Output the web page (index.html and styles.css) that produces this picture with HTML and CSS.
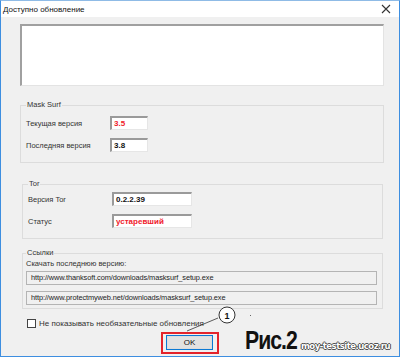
FILE: index.html
```html
<!DOCTYPE html>
<html>
    <head>
        <meta charset="UTF-8">
        <title>Доступно обновление</title>
        <link rel="stylesheet" href="styles.css">
    </head>
    <body>
        <div class="window">
            <div class="titlebar">
                <span class="title">Доступно обновление</span>
                <svg class="close" width="10" height="10" viewBox="0 0 10 10">
                    <path d="M1 1L9 9M9 1L1 9" stroke="#333" stroke-width="1.1"/>
                </svg>
            </div>
            <div class="content">
                <div class="notes"></div>

                <fieldset class="group group-mask">
                    <legend>Mask Surf</legend>
                    <div class="row">
                        <span class="label">Текущая версия</span>
                        <div class="field short red">3.5</div>
                    </div>
                    <div class="row">
                        <span class="label">Последняя версия</span>
                        <div class="field short">3.8</div>
                    </div>
                </fieldset>

                <fieldset class="group group-tor">
                    <legend>Tor</legend>
                    <div class="row">
                        <span class="label">Версия Tor</span>
                        <div class="field long">0.2.2.39</div>
                    </div>
                    <div class="row">
                        <span class="label">Статус</span>
                        <div class="field long red">устаревший</div>
                    </div>
                </fieldset>

                <fieldset class="group group-links">
                    <legend>Ссылки</legend>
                    <div class="caption">Скачать последнюю версию:</div>
                    <div class="url">http://www.thanksoft.com/downloads/masksurf_setup.exe</div>
                    <div class="url">http://www.protectmyweb.net/downloads/masksurf_setup.exe</div>
                </fieldset>

                <label class="check">
                    <span class="box"></span>
                    Не показывать необязательные обновления
                </label>

                <div class="footer">
                    <div class="highlight">
                        <button class="ok">OK</button>
                    </div>
                </div>
            </div>

            <!-- annotations drawn over the screenshot -->
            <svg class="pointer" width="60" height="30" viewBox="0 0 60 30">
                <line x1="2" y1="27" x2="33" y2="14" stroke="#333" stroke-width="0.8"/>
                <circle cx="42" cy="11" r="8" fill="#fff" stroke="#333" stroke-width="1"/>
            </svg>
            <span class="num">1</span>
            <span class="dot"></span>
            <span class="fig">Рис.2</span>
            <span class="site">moy-testsite.ucoz.ru</span>
        </div>
    </body>
</html>
```

FILE: styles.css
```css
body {
    margin: 0;
    font-family: "Liberation Sans", Arial, sans-serif;
    font-size: 8px;
    color: #222;
}
.window {
    position: relative;
    width: 400px;
    height: 357px;
    box-sizing: border-box;
    border: 1px solid #3d8ee0;
    border-top-color: #8fbbe6;
    background-color: #f0f0f0;
    overflow: hidden;
}
.titlebar {
    height: 16px;
    background-color: #fff;
    display: flex;
    align-items: center;
    justify-content: space-between;
    padding: 0 8px 0 2px;
}
.title {
    font-size: 8px;
    color: #111;
}
.content {
    padding: 7px 15px 0 19px;
}
.notes {
    height: 62px;
    box-sizing: border-box;
    background-color: #fff;
    border-top: 2px solid #a0a0a0;
    border-left: 2px solid #a0a0a0;
    border-right: 1px solid #e3e3e3;
    border-bottom: 1px solid #e3e3e3;
}
.group {
    margin: 0;
    border: 1px solid #dcdcdc;
    padding: 0 5px;
    min-width: 0;
}
.group legend {
    padding: 0 1px;
    margin-left: 0;
    line-height: 10px;
    font-size: 7.5px;
    color: #333;
}
.group-mask {
    margin-top: 14px;
    padding-top: 6px;
    padding-bottom: 10px;
}
.group-tor {
    margin: 16px 1px 0 2px;
    padding-top: 3px;
    padding-bottom: 10px;
}
.group-links {
    margin: 9px 1px 0 2px;
    padding-top: 1px;
    padding-bottom: 3px;
    padding-left: 3px;
}
.row {
    display: flex;
    align-items: center;
    height: 14px;
}
.row + .row {
    margin-top: 8px;
}
.label {
    width: 84px;
    font-size: 7.5px;
    color: #333;
}
.field {
    height: 14px;
    box-sizing: border-box;
    background-color: #fff;
    border-top: 2px solid #9a9a9a;
    border-left: 2px solid #9a9a9a;
    border-right: 1px solid #e6e6e6;
    border-bottom: 1px solid #e6e6e6;
    padding-left: 2px;
    font-weight: bold;
    line-height: 11px;
    color: #111;
}
.field.short {
    width: 38px;
}
.field.long {
    width: 80px;
}
.field.red {
    color: #f0202a;
}
.caption {
    line-height: 10px;
    font-size: 7.5px;
    color: #333;
}
.url {
    margin-top: 2px;
    height: 14px;
    box-sizing: border-box;
    border: 1px solid #b4b4b4;
    background-color: #f0f0f0;
    padding-left: 4px;
    line-height: 12px;
    font-size: 7.4px;
    letter-spacing: -0.1px;
    color: #222;
}
.url + .url {
    margin-top: 6px;
}
.check {
    display: flex;
    align-items: center;
    gap: 3px;
    margin: 10px 0 0 7px;
    height: 9px;
    color: #333;
}
.box {
    width: 7px;
    height: 7px;
    border: 1px solid #444;
    background-color: #fff;
}
.footer {
    display: flex;
    padding-left: 141px;
    margin-top: 4px;
}
.highlight {
    border: 2px solid #e3232b;
    padding: 1px 4px 2px 3px;
}
.ok {
    width: 47px;
    height: 15px;
    margin: 0;
    padding: 0;
    border: 1px solid #0a78d4;
    box-shadow: inset 0 0 0 1px #dcdcdc;
    background-color: #e1e1e1;
    font-family: "Liberation Sans", Arial, sans-serif;
    font-size: 8px;
    color: #111;
}
.pointer {
    position: absolute;
    left: 184px;
    top: 303px;
}
.num {
    position: absolute;
    left: 222px;
    top: 309px;
    width: 8px;
    text-align: center;
    font-size: 9px;
    font-weight: bold;
    line-height: 12px;
    color: #111;
}
.dot {
    position: absolute;
    left: 249px;
    top: 314px;
    width: 1px;
    height: 1px;
    background-color: #666;
}
.fig {
    position: absolute;
    left: 244px;
    top: 325px;
    font-family: "Liberation Sans", Arial, sans-serif;
    font-size: 25px;
    font-weight: bold;
    letter-spacing: -1.2px;
    color: #111;
    transform: scaleX(0.85);
    transform-origin: left;
}
.site {
    position: absolute;
    left: 300px;
    top: 340px;
    white-space: nowrap;
    font-family: "DejaVu Sans", sans-serif;
    font-size: 8.5px;
    font-weight: bold;
    letter-spacing: -0.5px;
    line-height: 11px;
    color: #fff;
    text-shadow: 0 0 1px #333, 1px 0 0 #555, -1px 0 0 #555, 0 1px 0 #555, 0 -1px 0 #555;
}
```
